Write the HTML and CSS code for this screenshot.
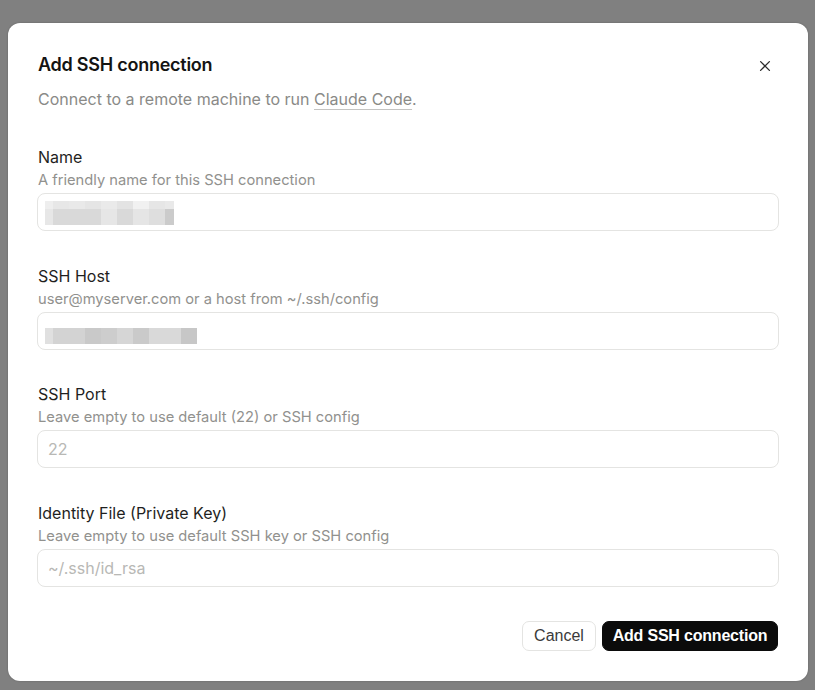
FILE: index.html
```html
<!DOCTYPE html>
<html lang="en">
<head>
<meta charset="utf-8">
<title>Add SSH connection</title>
<link rel="stylesheet" href="styles.css">
</head>
<body>
<div class="backdrop">
  <div class="modal" role="dialog" aria-labelledby="dlg-title">
    <div class="modal-header">
      <h2 id="dlg-title" class="modal-title">Add SSH connection</h2>
      <button class="close-btn" aria-label="Close">
        <svg width="16" height="16" viewBox="0 0 16 16" fill="none" stroke="#2b2b2b" stroke-width="1.3" stroke-linecap="round"><path d="M3.6 3.6 12.4 12.4M12.4 3.6 3.6 12.4"/></svg>
      </button>
    </div>
    <p class="modal-desc">Connect to a remote machine to run <a class="link" href="#">Claude Code</a>.</p>

    <div class="fields">
      <div class="field">
        <div class="label">Name</div>
        <div class="hint">A friendly name for this SSH connection</div>
        <div class="input">
          <div class="redact redact-name">
            <div class="rrow r1">
              <i style="width:8px;background:#eeeeee"></i><i style="width:16px;background:#e7e7e7"></i><i style="width:16px;background:#e9e9e9"></i><i style="width:16px;background:#e5e5e5"></i><i style="width:16px;background:#eaeaea"></i><i style="width:16px;background:#e3e3e3"></i><i style="width:16px;background:#f1f1f1"></i><i style="width:16px;background:#e6e6e6"></i><i style="width:9px;background:#e9e9e9"></i>
            </div>
            <div class="rrow r2">
              <i style="width:8px;background:#e7e7e7"></i><i style="width:48px;background:#d9d9d9"></i><i style="width:16px;background:#e6e6e6"></i><i style="width:16px;background:#d9d9d9"></i><i style="width:16px;background:#e5e5e5"></i><i style="width:16px;background:#dedede"></i><i style="width:9px;background:#cbcbcb"></i>
            </div>
          </div>
        </div>
      </div>

      <div class="field">
        <div class="label">SSH Host</div>
        <div class="hint">user@myserver.com or a host from ~/.ssh/config</div>
        <div class="input">
          <div class="redact redact-host">
            <div class="rrow r3">
              <i style="width:8px;background:#e0e0e0"></i><i style="width:32px;background:#d3d3d3"></i><i style="width:16px;background:#c9c9c9"></i><i style="width:16px;background:#cdcdcd"></i><i style="width:16px;background:#d6d6d6"></i><i style="width:16px;background:#cacaca"></i><i style="width:32px;background:#d9d9d9"></i><i style="width:16px;background:#c7c7c7"></i>
            </div>
          </div>
        </div>
      </div>

      <div class="field">
        <div class="label">SSH Port</div>
        <div class="hint">Leave empty to use default (22) or SSH config</div>
        <div class="input"><span class="placeholder">22</span></div>
      </div>

      <div class="field">
        <div class="label">Identity File (Private Key)</div>
        <div class="hint">Leave empty to use default SSH key or SSH config</div>
        <div class="input"><span class="placeholder">~/.ssh/id_rsa</span></div>
      </div>
    </div>

    <div class="actions">
      <button class="btn btn-cancel">Cancel</button>
      <button class="btn btn-primary">Add SSH connection</button>
    </div>
  </div>
</div>
</body>
</html>
```

FILE: styles.css
```css
* { box-sizing: border-box; }

html, body {
  margin: 0;
  padding: 0;
  height: 100%;
}

body {
  background: #808080;
  font-family: Inter, "Noto Sans", sans-serif;
  color: #1a1a1a;
}

.backdrop {
  padding: 23px 7px 0 8px;
}

.modal {
  width: 800px;
  height: 658px;
  background: #ffffff;
  border-radius: 12px;
  padding: 29px;
  display: flex;
  flex-direction: column;
  box-shadow: 0 0 2px rgba(0,0,0,0.25);
}

.modal-header {
  display: flex;
  align-items: flex-start;
  justify-content: space-between;
  height: 28px;
}

.modal-title {
  margin: 1px 0 0 1px;
  font-size: 18px;
  line-height: 24px;
  font-weight: 600;
  color: #141413;
  letter-spacing: -0.25px;
}

.close-btn {
  width: 28px;
  height: 28px;
  border: 0;
  background: transparent;
  padding: 0;
  display: flex;
  align-items: center;
  justify-content: center;
  cursor: pointer;
}

.modal-desc {
  margin: 7px 0 0 1px;
  font-size: 16px;
  line-height: 24px;
  color: #8a8a87;
}

.link {
  color: #8a8a87;
  text-decoration: underline;
  text-decoration-color: #c4c4c2;
  text-underline-offset: 4px;
  text-decoration-thickness: 1px;
}

.fields {
  margin-top: 34px;
  display: flex;
  flex-direction: column;
  gap: 32.7px;
}

.field {
  display: flex;
  flex-direction: column;
}

.label {
  margin-left: 1px;
  font-size: 16px;
  line-height: 24px;
  color: #1f1f1e;
}

.hint {
  margin: 1px 0 0 1px;
  font-size: 14.7px;
  line-height: 20px;
  color: #91918e;
}

.input {
  margin-top: 3px;
  height: 38px;
  border: 1px solid #e4e4e2;
  border-radius: 8px;
  padding: 0 10px;
  display: flex;
  align-items: center;
  font-size: 16px;
}

.placeholder {
  color: #b8b8b5;
}

.redact {
  display: flex;
  flex-direction: column;
  margin-left: -3px;
}

.rrow {
  display: flex;
}

.rrow i {
  display: block;
}

.r1 { height: 8px; }
.r2 { height: 16px; }
.r3 { height: 16px; }

.redact-name { margin-top: 2px; }
.redact-host { margin-top: 10px; }

.actions {
  margin-top: 34px;
  margin-right: 1px;
  display: flex;
  justify-content: flex-end;
  gap: 6px;
}

.btn {
  height: 30px;
  border-radius: 7px;
  font-family: "Liberation Sans", Arial, sans-serif;
  font-size: 16px;
  white-space: nowrap;
  cursor: pointer;
}

.btn-cancel {
  width: 74px;
  background: #ffffff;
  border: 1px solid #e4e4e2;
  color: #3a3a3a;
  padding: 0;
}

.btn-primary {
  width: 176px;
  background: #0b0b0b;
  border: 1px solid #0b0b0b;
  color: #ffffff;
  font-weight: 700;
  letter-spacing: -0.2px;
  padding: 0;
}
```
